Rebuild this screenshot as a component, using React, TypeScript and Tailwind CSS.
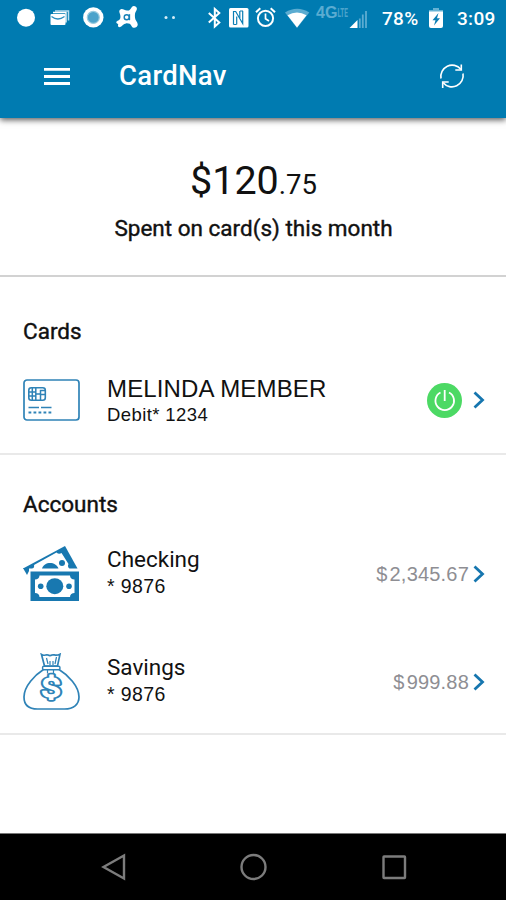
import type { ReactNode } from "react";

type Account = {
  name: string;
  mask: string;
  amount: string;
  icon: ReactNode;
};

function StatusBar() {
  return (
    <div className="flex h-9 items-center text-white">
      <svg className="h-9 w-[376px] shrink-0" viewBox="0 0 376 36" fill="none">
        {/* recording dot */}
        <circle cx="26" cy="17.7" r="9" fill="#fff" />

        {/* mail */}
        <path d="M55 11h13.5v9.5" stroke="#b5dcee" strokeWidth="1.5" />
        <path d="M53 12.5h13v10" stroke="#fff" strokeWidth="1.3" />
        <rect x="50.5" y="14" width="15" height="11" rx="1" fill="#fff" />
        <path d="M51.5 16.5q6.300 5 13 0" stroke="#2b8fc0" strokeWidth="1.3" />

        {/* ring */}
        <circle cx="93.3" cy="17.4" r="10.2" fill="#fff" />
        <circle cx="93.3" cy="17.4" r="6" fill="#4ba3cb" stroke="#9accdf" strokeWidth="1.2" />

        {/* antivirus */}
        <path
          d="M121 9.2c2-.5 3.700 1.200 6 1.400 2.700.2 3.700-1.800 4.900-3.700 1.400-1.800 4.800-.8 5 1.500.2 2-1.600 3-1.900 5.400-.3 2.800-.1 5.200 1.300 7.300 1.800 2.500 2 4.600.2 6-2 1.500-4.200.6-5-1.200-.9-2-2.800-2.700-5.500-2.500-2.500.2-3.800 2.900-5.800 3.700-1.700.6-2.800-1-2-2.500.4-.9-1.600-.5-1.900-2-.2-1.500 2.500-1.900 3.500-3.300 1.200-1.700.6-4.300-.2-6.300-.7-1.700-.4-3.300 1.400-3.800z"
          fill="#fff"
        />
        <circle cx="126.700" cy="17.300" r="2.500" stroke="#1782b8" strokeWidth="1.400" />
        <path d="M129.500 14.200v6" stroke="#1782b8" strokeWidth="1.300" />

        {/* more notifications */}
        <circle cx="166" cy="17.600" r="1.500" fill="#d6edf7" />
        <circle cx="173.500" cy="17.600" r="1.500" fill="#d6edf7" />

        {/* bluetooth */}
        <path d="M208.800 13l10.500 9.500-4.500 4V9l4.500 4-10.500 9.500" stroke="#fff" strokeWidth="2" />

        {/* nfc */}
        <rect x="229" y="8" width="19.500" height="19.500" rx="1.500" fill="#fff" />
        <path d="M233.500 24.500V11.500h2.200l7 12V11M233.500 24.500h3M240 11h3" stroke="#0b7eb4" strokeWidth="1.200" />
        <path d="M236.700 16.500v8M239.800 11v7" stroke="#0b7eb4" strokeWidth="1.200" />

        {/* alarm */}
        <circle cx="265.500" cy="18.300" r="7.600" stroke="#fff" strokeWidth="2" />
        <path d="M265.500 13.500v5.200l3.500 2.300" stroke="#fff" strokeWidth="1.700" />
        <path d="M256 12.300l4.300-4M275 12.300l-4.300-4" stroke="#fff" strokeWidth="2" />

        {/* wifi */}
        <path d="M285 12.500q12.200-7.500 24.300 0L297 28z" fill="#5bacd1" />
        <path d="M287.500 15.300q9.500-5.500 19 0L297 27.500z" fill="#fff" />

        <text x="316" y="17.500" fill="#5bacd1" fontSize="16" fontWeight="700" fontFamily="Liberation Sans, sans-serif" textLength="21.500" lengthAdjust="spacingAndGlyphs">4G</text>
        <text x="337.500" y="17" fill="#4ca4cc" fontSize="12" fontWeight="700" fontFamily="Roboto, sans-serif" textLength="10.500" lengthAdjust="spacingAndGlyphs">LTE</text>

        {/* signal */}
        <path d="M349.500 28l8-8V28z" fill="#fff" />
        <path d="M359.800 28v-9.500M362.800 28V14.500M366 28V11" stroke="#5bacd1" strokeWidth="1.800" />
      </svg>
      <span className="ml-1.5 w-[47px] whitespace-nowrap pt-0.5 text-[19px] font-medium tracking-[0.300px]">78%</span>
      <svg className="h-9 w-4" viewBox="0 0 16 36">
        <path d="M4 10V8h6v2h4v4H0v-4z" fill="#65b2d4" />
        <path d="M0 11.500h14V26q0 2-2 2H2q-2 0-2-2z" fill="#fff" />
        <path d="M9.500 13L3.500 20.300h3L5 25.500l6-7.200H8z" fill="#0b7eb4" />
      </svg>
      <span className="ml-3 whitespace-nowrap pt-0.5 text-[19px] font-medium tracking-[0.300px]">3:09</span>
    </div>
  );
}

function AppBar() {
  return (
    <div className="flex h-[82px] items-center pb-0.5 pl-11 pr-10 text-white">
      <svg className="h-7 w-[26px]" viewBox="0 0 26 28" stroke="currentColor" strokeWidth="2.800">
        <path d="M0 7.300h26M0 14.500h26M0 21.500h26" />
      </svg>
      <h1 className="ml-[49px] text-[27.500px] font-medium leading-8 tracking-[0.300px]">CardNav</h1>
      <svg className="ml-auto size-7" viewBox="0 0 28 28" fill="none" stroke="currentColor" strokeWidth="1.600">
        <path d="M3 16.500A11.300 11.300 0 0 1 22.800 7.200M25 11.500A11.300 11.300 0 0 1 5.200 20.800" />
        <path d="M23.300 2.500v5.500h-6M4.700 26v-6h6" />
      </svg>
    </div>
  );
}

function CardIcon() {
  return (
    <svg className="h-[42px] w-[57px]" viewBox="0 0 57 42" fill="none" stroke="#2f83b7">
      <rect x="1" y="1" width="55" height="40" rx="3" strokeWidth="1.700" />
      <rect x="5.800" y="8.800" width="16.500" height="12.500" rx="2.500" strokeWidth="1.600" />
      <path d="M9.300 9v12M12.800 9v12M6 13h7M6 17h7M22 11.500h-4.500v9.500M13 15h4M17.500 15.500h5" strokeWidth="1.500" />
      <path d="M5.500 28.500h10.500M18 28.500h10.500" strokeWidth="1.600" />
      <path d="M5.500 33.500h24" strokeWidth="1.800" strokeDasharray="2.800 2.200" />
    </svg>
  );
}

function CashIcon() {
  return (
    <svg className="h-14 w-[57px]" viewBox="0 0 57 56">
      {/* back note */}
      <path d="M0 22.500L42 0 54.500 22.500H0z" fill="#1878b0" />
      <path d="M9 23c2-1 2.500-2.500 2-4L33.500 6.500c1.500 1.500 3.500 1.500 5 .5L45.500 18c-1 1.500-.5 3.500 1 5z" fill="#fff" />
      <circle cx="39" cy="17" r="3" fill="#1878b0" />
      <path d="M19 22.500c2-7.500 14-7.500 16.500 0z" fill="#1878b0" />
      <path d="M0 22h6v3L4 29z" fill="#1878b0" />
      {/* front note */}
      <path d="M7.500 25.500H56V55H7.500z" fill="#1878b0" />
      <path d="M16.500 29.500h30.500c0 2.500 2 4 4.500 4v13.500c-2.500 0-4.500 1.500-4.500 4H16.500c0-2.500-2-4-4.500-4V33.500c2.500 0 4.500-1.500 4.500-4z" fill="#fff" />
      <ellipse cx="31.800" cy="40.200" rx="8.500" ry="8" fill="#1878b0" />
      <circle cx="17.700" cy="40.200" r="2.800" fill="#1878b0" />
      <circle cx="46" cy="40.200" r="2.800" fill="#1878b0" />
    </svg>
  );
}

function MoneyBagIcon() {
  return (
    <svg className="h-[58px] w-[57px]" viewBox="0 0 57 58" fill="none" stroke="#2f83b7" strokeWidth="1.700">
      <path d="M21.500 13L18.500 1.500c3 2 4.500-.5 6.500.5 1.500.8 2.500.8 4 0 2-1 3.500 1.500 8-.8L34.500 13z" />
      <path d="M23.500 5l1.500 6M27 8v4M30 8v4M33.500 4l-1.500 7" strokeWidth="1.200" />
      <rect x="19.500" y="13.300" width="17.500" height="3.400" rx="1.500" strokeWidth="1.400" />
      <path d="M24.500 17v3.500M30.500 17v3.500" strokeWidth="1.200" />
      <path d="M20.500 16.500C12 22 1 33 1 44c0 7.500 4.500 12 13.500 12h27C50.500 56 56 51.500 56 44c0-11-11-22-20-27.500" />
      <g fontSize="25" fontFamily="Roboto, sans-serif" strokeLinejoin="round">
        <text x="18" y="43.500" textLength="20" lengthAdjust="spacingAndGlyphs" strokeWidth="4.400">$</text>
        <text x="18" y="43.500" textLength="20" lengthAdjust="spacingAndGlyphs" stroke="#fff" strokeWidth="1.200" fill="#fff">$</text>
      </g>
    </svg>
  );
}

function Chevron() {
  return (
    <svg className="h-[18px] w-3 shrink-0" viewBox="0 0 12 18" fill="none" stroke="#1676af" strokeWidth="2.800">
      <path d="M1.500 1.500L9.500 9l-8 7.500" />
    </svg>
  );
}

const accounts: Account[] = [
  { name: "Checking", mask: "* 9876", amount: "2,345.67", icon: <CashIcon /> },
  { name: "Savings", mask: "* 9876", amount: "999.88", icon: <MoneyBagIcon /> },
];

export default function App() {
  return (
    <div className="flex h-[900px] w-[506px] flex-col overflow-hidden bg-white font-['Roboto',sans-serif] text-[#111]">
      <header className="relative z-10 h-[118px] shrink-0 bg-[#007bb1] shadow-[0_2px_6px_rgba(0,0,0,0.65)]">
        <StatusBar />
        <AppBar />
      </header>

      <section className="flex h-[159px] shrink-0 flex-col items-center border-b-2 border-[#d2d2d2] pl-px pt-[39px]">
        <p className="text-[39.500px] leading-[48px]">
          $120<span className="text-[27.500px]">.75</span>
        </p>
        <p className="mt-[3px] text-[22.500px] leading-8 [-webkit-text-stroke:0.400px_#111]">Spent on card(s) this month</p>
      </section>

      <section className="flex h-[178px] shrink-0 flex-col border-b-2 border-[#e9e9e9] pl-[23px] pr-[21px] pt-[38px]">
        <h2 className="text-[22.500px] leading-8 [-webkit-text-stroke:0.400px_#111]">Cards</h2>
        <div className="mt-[21px] flex h-16 items-center">
          <CardIcon />
          <div className="ml-[27px] pt-[3px] font-['Liberation_Sans',sans-serif]">
            <p className="text-2xl leading-[26px] tracking-[0.150px]">MELINDA MEMBER</p>
            <p className="text-[18.500px] leading-[25px] tracking-[0.400px]">Debit* 1234</p>
          </div>
          <svg className="ml-auto mr-[11px] size-[35px]" viewBox="0 0 35 35" fill="none" stroke="#fff" strokeWidth="1.800">
            <circle cx="17.500" cy="17.500" r="17.500" fill="#4cd964" stroke="none" />
            <path d="M13.500 9.500a9.300 9.300 0 1 0 8.500 0M17.700 7v11" />
          </svg>
          <Chevron />
        </div>
      </section>

      <section className="flex h-[280px] shrink-0 flex-col border-b-2 border-[#e9e9e9] pl-[23px] pr-[21px] pt-[33px]">
        <h2 className="text-[22.500px] leading-8 [-webkit-text-stroke:0.400px_#111]">Accounts</h2>
        {accounts.map((account) => (
          <div key={account.name} className="flex h-[108px] shrink-0 items-center">
            {account.icon}
            <div className="ml-[27px] pb-1">
              <p className="text-[22.500px] leading-7">{account.name}</p>
              <p className="font-['Liberation_Sans',sans-serif] text-[19.500px] leading-[26px] tracking-[0.400px]">{account.mask}</p>
            </div>
            <span className="ml-auto mr-1 font-['Liberation_Sans',sans-serif] text-[20px] tracking-[0.200px] text-[#8e8e93]">
              <span className="mr-0.5">$</span>
              {account.amount}
            </span>
            <Chevron />
          </div>
        ))}
      </section>

      <nav className="mt-auto flex h-[67px] shrink-0 items-center justify-center border-t border-[#777] bg-black">
        <svg className="h-8 w-[320px]" viewBox="0 0 320 32" fill="none" stroke="#7c7c7c" strokeWidth="2.400">
          <path d="M31 4.500v23L10.500 16z" />
          <circle cx="160.500" cy="16" r="12" />
          <rect x="290.500" y="5.500" width="21.500" height="21.500" rx="0.500" />
        </svg>
      </nav>
    </div>
  );
}
